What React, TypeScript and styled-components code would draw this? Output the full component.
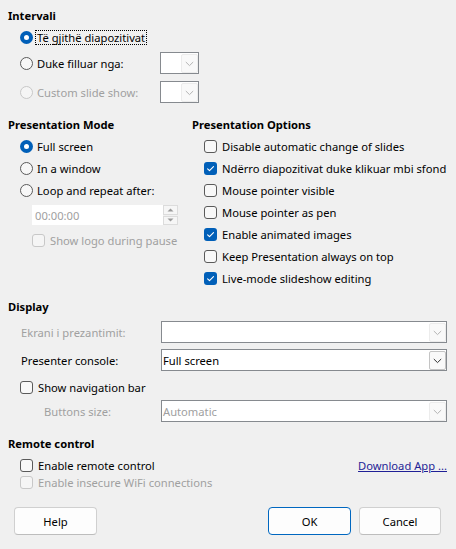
import React from "react";
import styled, { createGlobalStyle, css } from "styled-components";

const GlobalStyle = createGlobalStyle`
  html, body { margin: 0; padding: 0; background: #f0f0f0; }
  * { box-sizing: border-box; }
`;

const Dialog = styled.div`
  width: 456px;
  height: 549px;
  background: #f0f0f0;
  padding: 8px 9px 0 8px;
  font-family: "Noto Sans", "Open Sans", sans-serif;
  font-size: 11.2px;
  color: #000;
  display: flex;
  flex-direction: column;
  overflow: hidden;
`;

const Section = styled.section<{ $mt?: number }>`
  display: flex;
  flex-direction: column;
  margin-top: ${(p) => p.$mt ?? 0}px;
`;

const Heading = styled.div`
  font-weight: 700;
  font-size: 11.2px;
  height: 16px;
  line-height: 16px;
  white-space: nowrap;
`;

const Row = styled.div<{ $indent?: number; $h?: number; $mt?: number }>`
  display: flex;
  align-items: center;
  height: ${(p) => p.$h ?? 22}px;
  margin-top: ${(p) => p.$mt ?? 0}px;
  padding-left: ${(p) => p.$indent ?? 12}px;
  white-space: nowrap;
`;

const Label = styled.span<{ $disabled?: boolean; $focus?: boolean; $gap?: number }>`
  margin-left: ${(p) => p.$gap ?? 4}px;
  color: ${(p) => (p.$disabled ? "#a0a0a0" : "#000")};
  line-height: 13px;
  ${(p) =>
    p.$focus &&
    css`
      outline: 1px dotted #000;
      outline-offset: 0;
      padding: 0 1px;
      margin-left: 3px;
    `}
`;

const RadioMark = styled.span<{ $checked?: boolean; $disabled?: boolean }>`
  flex: none;
  width: 13px;
  height: 13px;
  border-radius: 50%;
  position: relative;
  ${(p) =>
    p.$checked
      ? css`
          background: #005fb8;
          &::after {
            content: "";
            position: absolute;
            left: 4px;
            top: 4px;
            width: 5px;
            height: 5px;
            border-radius: 50%;
            background: #fff;
          }
        `
      : css`
          background: ${p.$disabled ? "#f5f5f5" : "#f7f7f7"};
          border: 1px solid ${p.$disabled ? "#c8c8c8" : "#5a5a5a"};
        `}
`;

const CheckBox = styled.span<{ $checked?: boolean; $disabled?: boolean }>`
  flex: none;
  width: 13px;
  height: 13px;
  border-radius: 3px;
  display: flex;
  align-items: center;
  justify-content: center;
  ${(p) =>
    p.$checked
      ? css`
          background: #005fb8;
        `
      : css`
          background: ${p.$disabled ? "#f5f5f5" : "#f8f8f8"};
          border: 1px solid ${p.$disabled ? "#c8c8c8" : "#5a5a5a"};
        `}
`;

const Radio = ({
  label,
  checked,
  disabled,
  focus,
}: {
  label: string;
  checked?: boolean;
  disabled?: boolean;
  focus?: boolean;
}) => (
  <>
    <RadioMark $checked={checked} $disabled={disabled} />
    <Label $disabled={disabled} $focus={focus}>
      {label}
    </Label>
  </>
);

const Check = ({
  label,
  checked,
  disabled,
}: {
  label: string;
  checked?: boolean;
  disabled?: boolean;
}) => (
  <>
    <CheckBox $checked={checked} $disabled={disabled}>
      {checked && (
        <svg width="13" height="13" viewBox="0 0 13 13">
          <path d="M3.6 6.9 L5.5 8.7 L9.5 4.6" fill="none" stroke="#fff" strokeWidth="1.1" strokeLinecap="round" strokeLinejoin="round" />
        </svg>
      )}
    </CheckBox>
    <Label $disabled={disabled} $gap={5}>
      {label}
    </Label>
  </>
);

const Chevron = ({ dark }: { dark?: boolean }) => (
  <svg width="9" height="6" viewBox="0 0 9 6">
    <path d="M0.8 1 L4.5 4.6 L8.2 1" fill="none" stroke={dark ? "#333" : "#b4b4b4"} strokeWidth="1" />
  </svg>
);

const Spacer = styled.div<{ $w?: number }>`
  flex: ${(p) => (p.$w ? `0 0 ${p.$w}px` : "1")};
`;

const ComboBox = styled.div<{ $width?: number; $disabled?: boolean }>`
  flex: ${(p) => (p.$width ? "none" : "1")};
  width: ${(p) => (p.$width ? `${p.$width}px` : "auto")};
  height: 22px;
  border: 1px solid #868a8f;
  background: #fff;
  display: flex;
  align-items: stretch;
  color: ${(p) => (p.$disabled ? "#a0a0a0" : "#000")};
`;

const ComboText = styled.div`
  flex: 1;
  display: flex;
  align-items: center;
  padding-left: 1px;
  white-space: nowrap;
`;

const DropButton = styled.div<{ $active?: boolean }>`
  flex: none;
  width: 17px;
  margin: 1px 0 0 0;
  height: 19px;
  display: flex;
  align-items: center;
  justify-content: center;
  background: #f9f9f9;
  border: 1px solid ${(p) => (p.$active ? "#c4c4c4" : "#ececec")};
  border-radius: 2px;
`;

const Combo = ({
  width,
  text,
  disabled,
}: {
  width?: number;
  text?: string;
  disabled?: boolean;
}) => (
  <ComboBox $width={width} $disabled={disabled}>
    <ComboText>{text}</ComboText>
    <DropButton $active={!disabled}>
      <Chevron dark={!disabled} />
    </DropButton>
  </ComboBox>
);

const Columns = styled.div`
  display: grid;
  grid-template-columns: 184px 1fr;
  margin-top: 14px;
`;

const Column = styled.div`
  display: flex;
  flex-direction: column;
`;

const TimeWrap = styled.div`
  display: flex;
  align-items: stretch;
  height: 20px;
  margin-top: 4px;
  padding-left: 24px;
`;

const TimeField = styled.div`
  width: 131px;
  background: #fff;
  color: #a0a0a0;
  display: flex;
  align-items: center;
  padding-left: 3px;
`;

const SpinCol = styled.div`
  width: 15px;
  display: flex;
  flex-direction: column;
  gap: 1px;
`;

const SpinHalf = styled.div`
  flex: 1;
  background: #f6f6f6;
  border: 1px solid #dcdcdc;
  display: flex;
  align-items: center;
  justify-content: center;
`;

const Tri = ({ up }: { up?: boolean }) => (
  <svg width="7" height="4" viewBox="0 0 7 4">
    <path d={up ? "M0.5 3.5 L3.5 0.5 L6.5 3.5 Z" : "M0.5 0.5 L3.5 3.5 L6.5 0.5 Z"} fill="#9a9a9a" />
  </svg>
);

const FieldRow = styled.div<{ $mt?: number; $indent?: number }>`
  display: grid;
  grid-template-columns: 153px 1fr;
  align-items: center;
  height: 22px;
  margin-top: ${(p) => p.$mt ?? 0}px;
  white-space: nowrap;
  & > span:first-child {
    padding-left: ${(p) => p.$indent ?? 13}px;
  }
`;

const FieldLabel = styled.span<{ $disabled?: boolean }>`
  color: ${(p) => (p.$disabled ? "#a0a0a0" : "#000")};
`;

const Link = styled.a`
  color: #1f1f96;
  text-decoration: underline;
  cursor: pointer;
`;

const ButtonBar = styled.div`
  display: flex;
  align-items: center;
  margin-top: 17px;
  padding: 0 6px;
  gap: 8px;
`;

const Button = styled.button<{ $primary?: boolean; $width?: number }>`
  width: ${(p) => p.$width ?? 83}px;
  height: 28px;
  font-family: inherit;
  font-size: 11.2px;
  color: #000;
  background: #fdfdfd;
  border: 1px solid ${(p) => (p.$primary ? "#0067c0" : "#d0d0d0")};
  border-bottom-color: ${(p) => (p.$primary ? "#0067c0" : "#bdbdbd")};
  border-radius: 4px;
  padding: 0;
`;

export default function App() {
  return (
    <>
      <GlobalStyle />
      <Dialog>
        <Section>
          <Heading>Intervali</Heading>
          <Row $mt={2}>
            <Radio label="Të gjithë diapozitivat" checked focus />
          </Row>
          <Row $mt={4}>
            <Radio label="Duke filluar nga:" />
            <Spacer />
            <Combo width={39} disabled />
            <Spacer $w={248} />
          </Row>
          <Row $mt={7}>
            <Radio label="Custom slide show:" disabled />
            <Spacer />
            <Combo width={39} disabled />
            <Spacer $w={248} />
          </Row>
        </Section>

        <Columns>
          <Column>
            <Heading>Presentation Mode</Heading>
            <Row $mt={2}>
              <Radio label="Full screen" checked />
            </Row>
            <Row>
              <Radio label="In a window" />
            </Row>
            <Row>
              <Radio label="Loop and repeat after:" />
            </Row>
            <TimeWrap>
              <TimeField>00:00:00</TimeField>
              <SpinCol>
                <SpinHalf>
                  <Tri up />
                </SpinHalf>
                <SpinHalf>
                  <Tri />
                </SpinHalf>
              </SpinCol>
            </TimeWrap>
            <Row $mt={4} $indent={24}>
              <Check label="Show logo during pause" disabled />
            </Row>
          </Column>
          <Column>
            <Heading>Presentation Options</Heading>
            <Row $mt={2}>
              <Check label="Disable automatic change of slides" />
            </Row>
            <Row>
              <Check label="Ndërro diapozitivat duke klikuar mbi sfond" checked />
            </Row>
            <Row>
              <Check label="Mouse pointer visible" />
            </Row>
            <Row>
              <Check label="Mouse pointer as pen" />
            </Row>
            <Row>
              <Check label="Enable animated images" checked />
            </Row>
            <Row>
              <Check label="Keep Presentation always on top" />
            </Row>
            <Row>
              <Check label="Live-mode slideshow editing" checked />
            </Row>
          </Column>
        </Columns>

        <Section $mt={10}>
          <Heading>Display</Heading>
          <FieldRow $mt={6}>
            <FieldLabel $disabled>Ekrani i prezantimit:</FieldLabel>
            <Combo disabled />
          </FieldRow>
          <FieldRow $mt={6}>
            <FieldLabel>Presenter console:</FieldLabel>
            <Combo text="Full screen" />
          </FieldRow>
          <Row $mt={5}>
            <Check label="Show navigation bar" />
          </Row>
          <FieldRow $mt={2} $indent={36}>
            <FieldLabel $disabled>Buttons size:</FieldLabel>
            <Combo text="Automatic" disabled />
          </FieldRow>
        </Section>

        <Section $mt={14}>
          <Heading>Remote control</Heading>
          <Row $mt={4} $h={18}>
            <Check label="Enable remote control" />
            <Spacer />
            <Link>Download App ...</Link>
          </Row>
          <Row $h={16}>
            <Check label="Enable insecure WiFi connections" disabled />
          </Row>
        </Section>

        <ButtonBar>
          <Button>Help</Button>
          <Spacer />
          <Button $primary>OK</Button>
          <Button $width={82}>Cancel</Button>
        </ButtonBar>
      </Dialog>
    </>
  );
}
